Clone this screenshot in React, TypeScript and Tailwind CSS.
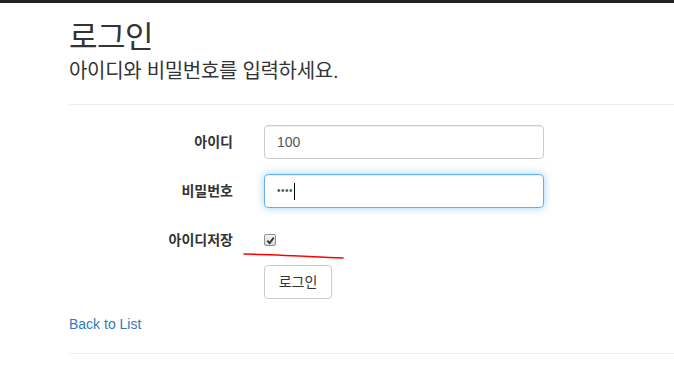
import React from 'react';

const font = "font-['Liberation_Sans','Noto_Sans_CJK_KR',sans-serif]";

const App: React.FC = () => {
  return (
    <div className={`relative min-h-screen bg-white text-[#333] ${font}`}>
      {/* top bar edge */}
      <div className="h-[3px] bg-[#222]" />

      <div className="pl-[69px]">
        {/* Page header */}
        <h1 className="mt-[19px] text-[31px] leading-[31px] tracking-[-0.5px] font-normal">로그인</h1>
        <p className="mt-[8px] text-[20px] leading-[20px] tracking-[-0.3px]">
          아이디와 비밀번호를 입력하세요.
        </p>
        <hr className="mt-[23px] border-t border-[#eee]" />

        {/* Login form */}
        <form className="mt-[20px]" onSubmit={(e) => e.preventDefault()}>
          <div className="flex items-center">
            <label className="w-[164px] text-right text-[14px] font-bold">아이디</label>
            <div className="ml-[31px] flex h-[34px] w-[280px] items-center rounded-[4px] border border-[#ccc] px-[12px] text-[14px] text-[#555] shadow-[inset_0_1px_1px_rgba(0,0,0,0.075)]">
              100
            </div>
          </div>

          <div className="mt-[15px] flex items-center">
            <label className="w-[164px] text-right text-[14px] font-bold">비밀번호</label>
            <div className="ml-[31px] flex h-[34px] w-[280px] items-center rounded-[4px] border border-[#66afe9] px-[12px] text-[#555] shadow-[inset_0_1px_1px_rgba(0,0,0,0.075),0_0_8px_rgba(102,175,233,0.6)]">
              <span className="text-[10px] leading-none tracking-[0.5px]">••••</span>
              <span className="ml-[1px] h-[17px] w-px bg-black" />
            </div>
          </div>

          <div className="mt-[15px] flex h-[34px] items-center">
            <label className="w-[164px] text-right text-[14px] font-bold">아이디저장</label>
            <span className="ml-[31px] flex h-[12px] w-[12px] items-center justify-center rounded-[2px] border border-[#8f8f8f] bg-gradient-to-b from-[#f4f4f4] to-[#d8d8d8]">
              <svg viewBox="0 0 10 10" className="h-[9px] w-[9px]">
                <path d="M1.5 5.2 L4 7.8 L8.6 1.8" fill="none" stroke="#333" strokeWidth="2" />
              </svg>
            </span>
          </div>

          <div className="mt-[8px] pl-[195px]">
            <button
              type="submit"
              className="h-[34px] w-[68px] rounded-[4px] border border-[#ccc] bg-white text-[14px] text-[#333]"
            >
              로그인
            </button>
          </div>
        </form>

        <div className="mt-[15px] text-[14px] leading-[20px]">
          <a href="#" className="text-[#337ab7]">Back to List</a>
        </div>
        <hr className="mt-[19px] border-t border-[#eee]" />
      </div>

      {/* red hand-drawn underline annotation */}
      <svg className="absolute left-[242px] top-[251px] h-[10px] w-[104px]" viewBox="0 0 104 10">
        <path d="M2 3 C 30 3.5, 65 5.5, 101 7" fill="none" stroke="#f00" strokeWidth="1.6" strokeLinecap="round" />
      </svg>
    </div>
  );
};

export default App;
